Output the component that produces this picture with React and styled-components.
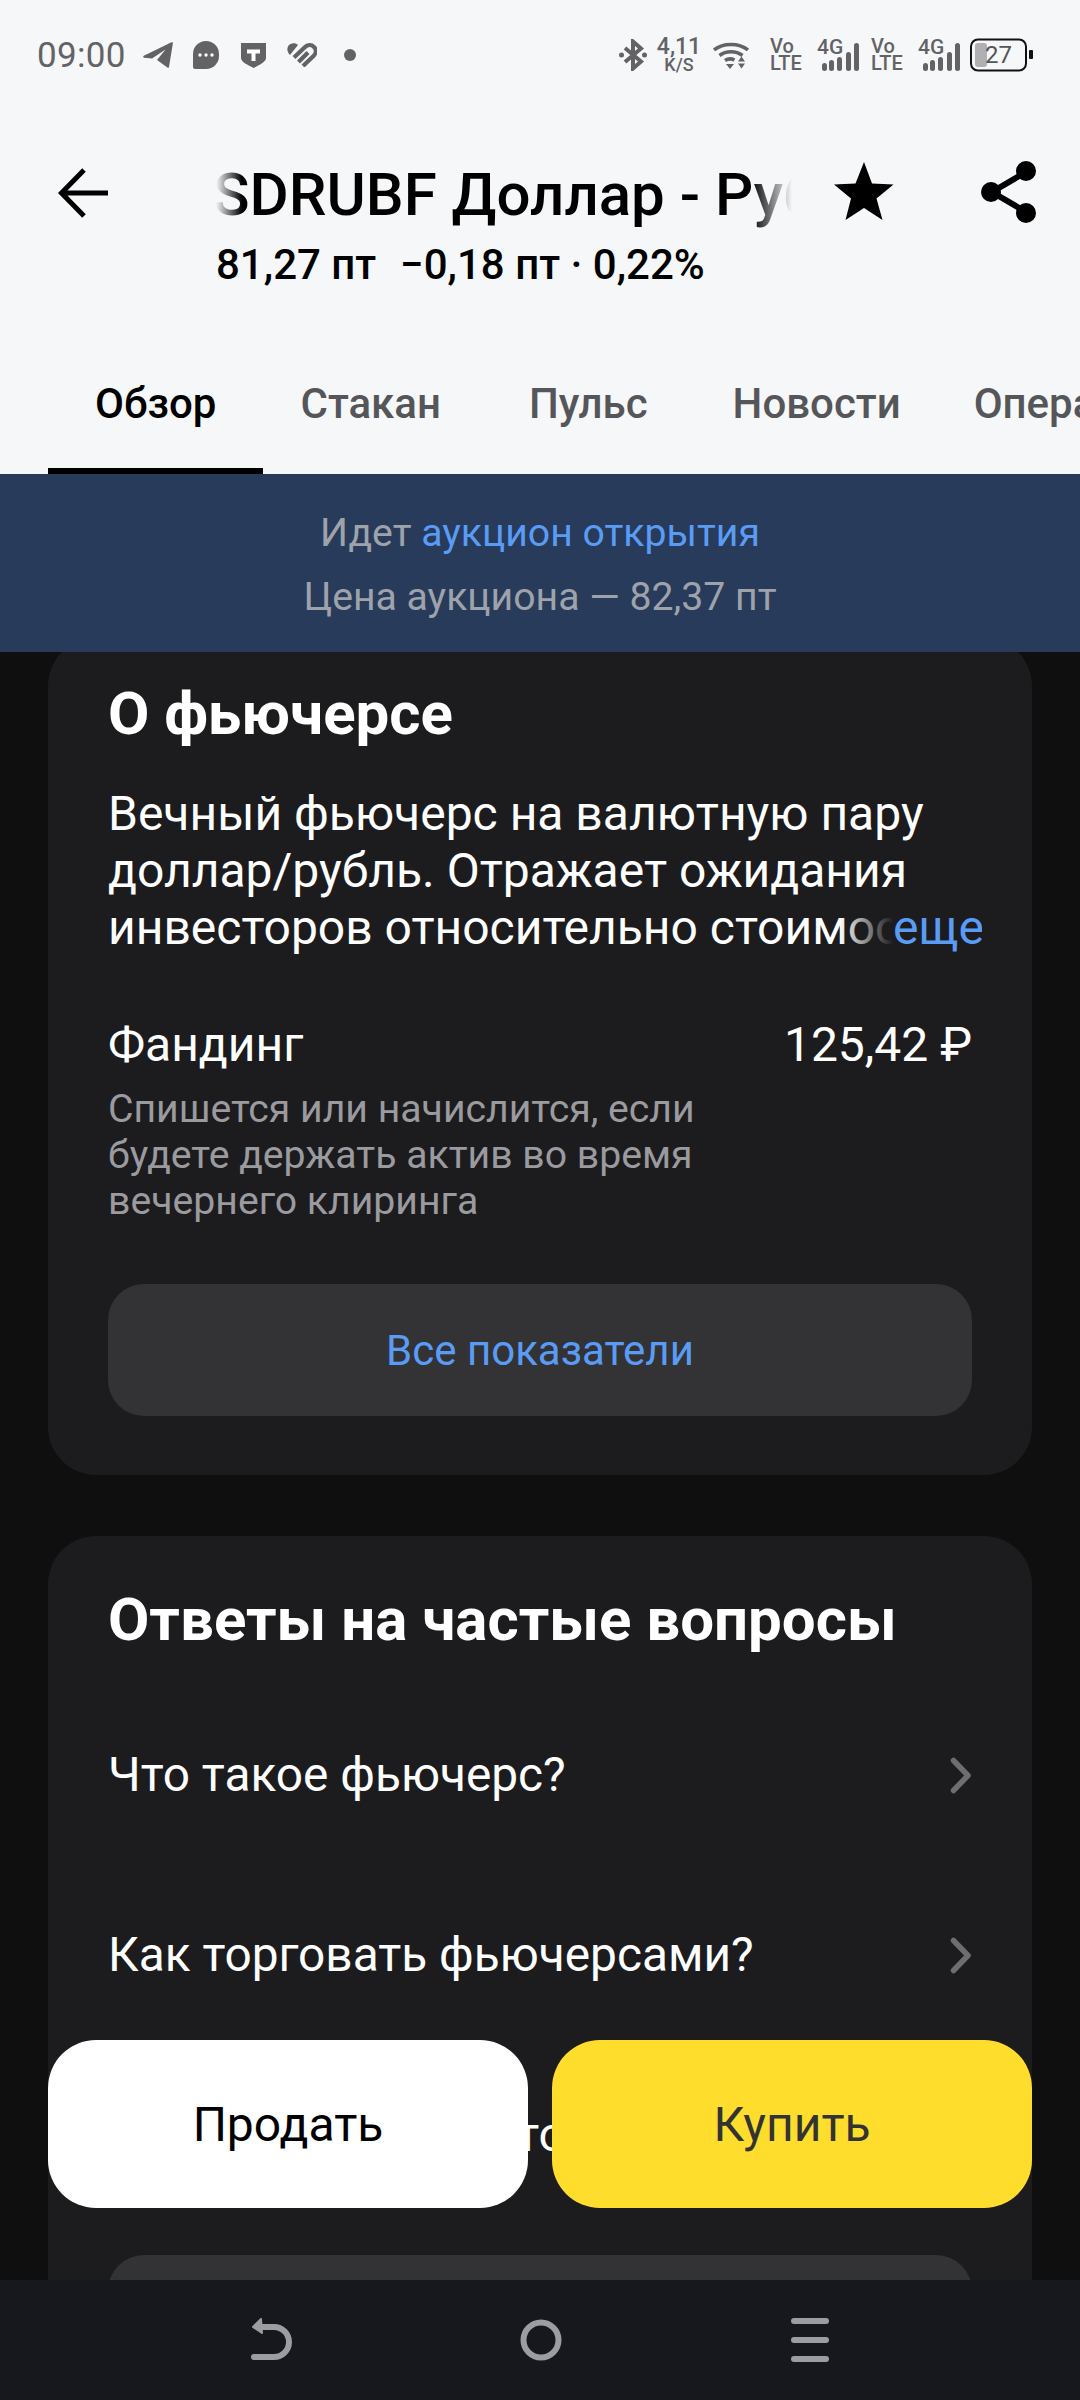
import React from "react";
import styled, { createGlobalStyle } from "styled-components";

const Global = createGlobalStyle`
  html, body { margin: 0; padding: 0; background: #0f0f10; }
  * { box-sizing: border-box; }
`;

const Screen = styled.div`
  position: relative;
  width: 1080px;
  height: 2400px;
  display: flex;
  flex-direction: column;
  overflow: hidden;
  font-family: Roboto, "Noto Sans", sans-serif;
  background: #0f0f10;
`;

const Top = styled.div`
  background: #f6f7f9;
  height: 474px;
  display: flex;
  flex-direction: column;
`;

const StatusBar = styled.div`
  height: 110px;
  padding: 0 47px 0 37px;
  display: flex;
  align-items: center;
  justify-content: space-between;
  color: #636366;
`;

const StatusGroup = styled.div`
  display: flex;
  align-items: center;
`;

const Slot = styled.div`
  margin-left: ${(p) => p.$left || 0}px;
  flex: none;
`;

const Time = styled.span`
  font-size: 35px;
  letter-spacing: 0.3px;
`;

const TwoLine = styled.div`
  width: ${(p) => p.$width}px;
  display: flex;
  flex-direction: column;
  align-items: ${(p) => p.$align || "center"};
  font-weight: 500;
  color: #636366;
`;

const Micro = styled.span`
  font-size: ${(p) => p.$size}px;
  line-height: ${(p) => p.$line}px;
`;

const Header = styled.div`
  height: 240px;
  display: flex;
  align-items: flex-start;
`;

const BackSlot = styled.div`
  width: 216px;
  padding: 58px 0 0 58px;
`;

const TitleBlock = styled.div`
  width: 584px;
  padding-top: 52px;
`;

const TitleClip = styled.div`
  overflow: hidden;
  white-space: nowrap;
  height: 70px;
  font-size: 60px;
  line-height: 66px;
  font-weight: 500;
  color: #000;
  mask-image: linear-gradient(90deg, transparent 0, #000 26px, #000 535px, transparent 576px);
`;

const TitleText = styled.span`
  display: inline-block;
  margin-left: -42px;
`;

const Quote = styled.div`
  margin-top: 10px;
  font-size: 42px;
  line-height: 46px;
  font-weight: 500;
  color: #000;
  white-space: pre;
`;

const QuoteDelta = styled.span`
  margin-left: 3px;
`;

const ActionIcon = styled.div`
  padding-top: ${(p) => p.$top}px;
  margin-left: ${(p) => p.$left}px;
`;

const Tabs = styled.div`
  margin-top: auto;
  height: 124px;
  padding-left: 95px;
  display: flex;
  white-space: nowrap;
  overflow: hidden;
`;

const Tab = styled.div`
  position: relative;
  height: 100%;
  margin-left: ${(p) => p.$left || 0}px;
  padding-top: 31px;
  font-size: 42px;
  line-height: 46px;
  font-weight: 500;
  color: ${(p) => (p.$active ? "#000" : "#55565a")};
  ${(p) =>
    p.$active &&
    `&::after {
      content: "";
      position: absolute;
      left: -47px;
      right: -47px;
      bottom: 0;
      height: 6px;
      background: #000;
    }`}
`;

const Banner = styled.div`
  height: 178px;
  flex: none;
  background: #283b5a;
  padding-top: 27px;
  text-align: center;
  font-size: 39.200px;
  line-height: 64px;
  color: #9ea3ab;
  position: relative;
  z-index: 1;
`;

const BannerLink = styled.span`
  color: #5a9cf5;
`;

const Scroll = styled.div`
  flex: 1;
  min-height: 0;
  overflow: hidden;
  padding: 0 48px;
`;

const Card = styled.section`
  background: #1c1c1e;
  border-radius: 48px;
  padding: 0 60px;
  margin-top: ${(p) => p.$top}px;
  height: ${(p) => p.$height}px;
  color: #fff;
`;

const CardTitle = styled.h2`
  margin: 0;
  padding-top: ${(p) => p.$top}px;
  font-size: 60px;
  line-height: 66px;
  font-weight: 700;
  color: #fff;
`;

const Body = styled.div`
  position: relative;
  margin-top: 38px;
  height: 171px;
  overflow: hidden;
  font-size: 48px;
  line-height: 57px;
  width: 874px;
`;

const More = styled.span`
  position: absolute;
  right: 0;
  bottom: 0;
  padding-left: 54px;
  color: #5a9cf5;
  background: linear-gradient(90deg, rgba(28, 28, 30, 0), #1c1c1e 54px);
  width: 143px;
`;

const FundingRow = styled.div`
  margin-top: 62px;
  display: flex;
  justify-content: space-between;
  align-items: flex-start;
  font-size: 48px;
  line-height: 54px;
`;

const Hint = styled.div`
  margin-top: 14px;
  font-size: 39.200px;
  line-height: 46px;
  color: #9a9a9f;
`;

const GhostButton = styled.div`
  margin-top: ${(p) => p.$top}px;
  height: 132px;
  background: #333335;
  border-radius: 36px;
  display: flex;
  align-items: center;
  justify-content: center;
  font-size: 42px;
  color: #5a9cf5;
`;

const FaqRow = styled.div`
  height: 180px;
  display: flex;
  align-items: center;
  justify-content: space-between;
  font-size: 47.800px;
  white-space: nowrap;
`;

const FaqList = styled.div`
  margin-top: 32px;
`;

const TradeBar = styled.div`
  position: absolute;
  left: 48px;
  right: 48px;
  top: 2040px;
  display: grid;
  grid-template-columns: 1fr 1fr;
  gap: 24px;
`;

const TradeButton = styled.div`
  height: 168px;
  border-radius: 48px;
  background: ${(p) => p.$bg};
  color: ${(p) => p.$color};
  display: flex;
  align-items: center;
  justify-content: center;
  font-size: 48px;
`;

const NavBar = styled.nav`
  height: 120px;
  flex: none;
  background: #16181d;
  display: flex;
  align-items: center;
  justify-content: center;
  gap: 228px;
`;

const Back = () => (
  <svg width="52" height="50" viewBox="0 0 52 50" fill="none" stroke="#000" strokeWidth="5" style={{ display: "block" }}>
    <path d="M50 25H4M26 2 3.500 25 26 48" />
  </svg>
);

const Star = () => (
  <svg width="60" height="60" viewBox="0 0 60 60" style={{ display: "block" }}>
    <path d="M30 1l8 21.500 21.500 1-17 14L48.500 59 30 47 11.500 59l5.500-21.500-17-14 21.500-1z" fill="#000" />
  </svg>
);

const Share = () => (
  <svg width="56" height="62" viewBox="0 0 56 62" style={{ display: "block" }}>
    <path d="M45 11 11 31l34 20" fill="none" stroke="#000" strokeWidth="6" />
    <circle cx="45" cy="10" r="10" />
    <circle cx="10" cy="31" r="10" />
    <circle cx="45" cy="52" r="10" />
  </svg>
);

const Chevron = () => (
  <svg width="22" height="37" viewBox="0 0 22 37" fill="none" stroke="#6e6e72" strokeWidth="5.500" strokeLinecap="round" strokeLinejoin="round">
    <path d="M3.500 3.500 18 18.500 3.500 33.500" />
  </svg>
);

const Plane = () => (
  <svg width="30" height="26" viewBox="0 0 30 26" fill="#636366" style={{ display: "block" }}>
    <path d="M.8 13.800 28.500.3c.8-.4 1.500.2 1.400 1L26 25c-.2.9-.9 1.100-1.600.6L14 18 22.500 7.500 9 16.500 1 15.800c-1-.2-1.100-1.500-.2-2z" />
  </svg>
);

const Bubble = () => (
  <svg width="26" height="28" viewBox="0 0 26 28" style={{ display: "block" }}>
    <path d="M13 0a13 13 0 0 1 13 13v2a13 13 0 0 1-13 13H2a2 2 0 0 1-2-2V13A13 13 0 0 1 13 0z" fill="#636366" />
    <circle cx="7" cy="14" r="1.700" fill="#fff" />
    <circle cx="13" cy="14" r="1.700" fill="#fff" />
    <circle cx="19" cy="14" r="1.700" fill="#fff" />
  </svg>
);

const Shield = () => (
  <svg width="25" height="25" viewBox="0 0 25 25" style={{ display: "block" }}>
    <path d="M0 0h25v15c0 4-7 7-12.500 10C7 22 0 19 0 15z" fill="#636366" />
    <path d="M6 6.500h13v4h-4.500V18h-4v-7.500H6z" fill="#fff" />
  </svg>
);

const Heart = () => (
  <svg width="30" height="24" viewBox="0 0 30 24" fill="none" style={{ display: "block" }}>
    <path d="M3 12C-.5 8.500-.5 3.500 3 1.300 6-.5 9 0 11 2z" fill="#636366" />
    <path d="M7 14.500 17.500 4.500c3-3 7-3 9.500-.5 2.500 2.500 2 6.500-.5 9L16 23" stroke="#636366" strokeWidth="4.200" />
    <path d="M11.500 19 21 9.500" stroke="#636366" strokeWidth="4.200" />
  </svg>
);

const Bluetooth = () => (
  <svg width="28" height="32" viewBox="0 0 28 32" fill="none" style={{ display: "block" }}>
    <path d="M6 9l16 13.500-8 7V2.500l8 7L6 23" stroke="#636366" strokeWidth="4" />
    <circle cx="2.500" cy="16" r="2.500" fill="#636366" />
    <circle cx="25.500" cy="16" r="2.500" fill="#636366" />
  </svg>
);

const Wifi = () => (
  <svg width="36" height="27" viewBox="0 0 36 27" fill="none" style={{ display: "block" }}>
    <path d="M1 8C10 .5 26 .5 35 8M6.500 13.500c6.500-5 16.500-5 23 0M12 18.500c3-2 6.500-2 9.500-.5" stroke="#636366" strokeWidth="3.500" />
    <path d="M13 22h8l-4 5zM25 19.500h7l-3.500-5zM25 21.500h7l-3.500 5z" fill="#636366" />
  </svg>
);

const Signal = () => (
  <svg width="42" height="34" viewBox="0 0 42 34" style={{ display: "block" }}>
    <text x="0" y="16" fontFamily="Roboto" fontWeight="500" fontSize="21" fill="#636366">4G</text>
    <rect x="5" y="25" width="5" height="8" rx="2.500" fill="#636366" />
    <rect x="12" y="22" width="5" height="11" rx="2.500" fill="#636366" />
    <rect x="20" y="19" width="5" height="14" rx="2.500" fill="#636366" />
    <rect x="29" y="14" width="5" height="19" rx="2.500" fill="#636366" />
    <rect x="37" y="5" width="5" height="28" rx="2.500" fill="#636366" />
  </svg>
);

const Battery = () => (
  <svg width="63" height="34" viewBox="0 0 63 34" style={{ display: "block" }}>
    <rect x="1" y="1.500" width="55" height="31" rx="7" fill="none" stroke="#111" strokeWidth="2" />
    <rect x="5" y="5" width="12" height="24" rx="3" fill="#b0b0b2" />
    <rect x="59" y="12" width="4" height="9" rx="1" fill="#111" />
    <text x="15" y="25" fontFamily="Roboto" fontSize="24" fill="#555">27</text>
  </svg>
);

const NavBack = () => (
  <svg width="42" height="46" viewBox="0 0 42 46" fill="none" stroke="#9c9da1" strokeWidth="6" strokeLinecap="round">
    <path d="M10 10h14a13.500 13.500 0 0 1 0 30H4" />
    <path d="M3 10 11 2l1 14z" fill="#9c9da1" strokeWidth="2" strokeLinejoin="round" />
  </svg>
);

const NavHome = () => (
  <svg width="42" height="44" viewBox="0 0 42 44" fill="none" stroke="#9c9da1" strokeWidth="6">
    <circle cx="21" cy="22" r="17.500" />
  </svg>
);

const NavMenu = () => (
  <svg width="40" height="44" viewBox="0 0 40 44" fill="#9c9da1">
    <rect x="1" y="0" width="38" height="6" rx="3" />
    <rect x="1" y="19" width="38" height="6" rx="3" />
    <rect x="1" y="38" width="38" height="6" rx="3" />
  </svg>
);

const VoLte = () => (
  <TwoLine $width={30} $align="flex-start">
    <Micro $size={20} $line={17}>Vo</Micro>
    <Micro $size={20} $line={17}>LTE</Micro>
  </TwoLine>
);

export default function App() {
  return (
    <Screen>
      <Global />
      <Top>
        <StatusBar>
          <StatusGroup>
            <Time>09:00</Time>
            <Slot $left={17}><Plane /></Slot>
            <Slot $left={20}><Bubble /></Slot>
            <Slot $left={22}><Shield /></Slot>
            <Slot $left={21}><Heart /></Slot>
            <Slot $left={27}>
              <svg width="12" height="12" viewBox="0 0 12 12" style={{ display: "block" }}>
                <circle cx="6" cy="6" r="6" fill="#636366" />
              </svg>
            </Slot>
          </StatusGroup>
          <StatusGroup>
            <Bluetooth />
            <Slot $left={14}>
              <TwoLine $width={36}>
                <Micro $size={23} $line={19}>4,11</Micro>
                <Micro $size={18} $line={17}>K/S</Micro>
              </TwoLine>
            </Slot>
            <Slot $left={16}><Wifi /></Slot>
            <Slot $left={21}><VoLte /></Slot>
            <Slot $left={17}><Signal /></Slot>
            <Slot $left={12}><VoLte /></Slot>
            <Slot $left={17}><Signal /></Slot>
            <Slot $left={10}><Battery /></Slot>
          </StatusGroup>
        </StatusBar>
        <Header>
          <BackSlot>
            <Back />
          </BackSlot>
          <TitleBlock>
            <TitleClip>
              <TitleText>USDRUBF Доллар - Рубль</TitleText>
            </TitleClip>
            <Quote>81,27 пт  <QuoteDelta>−0,18 пт · 0,22%</QuoteDelta></Quote>
          </TitleBlock>
          <ActionIcon $top={51} $left={34}>
            <Star />
          </ActionIcon>
          <ActionIcon $top={51} $left={87}>
            <Share />
          </ActionIcon>
        </Header>
        <Tabs>
          <Tab $active>Обзор</Tab>
          <Tab $left={84}>Стакан</Tab>
          <Tab $left={88}>Пульс</Tab>
          <Tab $left={85}>Новости</Tab>
          <Tab $left={73}>Операции</Tab>
        </Tabs>
      </Top>
      <Banner>
        <div>
          Идет <BannerLink>аукцион открытия</BannerLink>
        </div>
        <div>Цена аукциона — 82,37 пт</div>
      </Banner>
      <Scroll>
        <Card $top={-14} $height={837}>
          <CardTitle $top={43}>О фьючерсе</CardTitle>
          <Body>
            Вечный фьючерс на валютную пару доллар/рубль. Отражает ожидания инвесторов относительно стоимости доллара к рублю.
            <More>еще</More>
          </Body>
          <FundingRow>
            <span>Фандинг</span>
            <span>125,42 ₽</span>
          </FundingRow>
          <Hint>
            Спишется или начислится, если
            <br />
            будете держать актив во время
            <br />
            вечернего клиринга
          </Hint>
          <GhostButton $top={60}>Все показатели</GhostButton>
        </Card>
        <Card $top={61} $height={1000}>
          <CardTitle $top={51}>Ответы на частые вопросы</CardTitle>
          <FaqList>
            <FaqRow>
              <span>Что такое фьючерс?</span>
              <Chevron />
            </FaqRow>
            <FaqRow>
              <span>Как торговать фьючерсами?</span>
              <Chevron />
            </FaqRow>
            <FaqRow>
              <span>Как определяют стоимость?</span>
              <Chevron />
            </FaqRow>
          </FaqList>
          <GhostButton $top={30}>Все вопросы</GhostButton>
        </Card>
      </Scroll>
      <TradeBar>
        <TradeButton $bg="#fff" $color="#000">Продать</TradeButton>
        <TradeButton $bg="#ffdd2d" $color="#333">Купить</TradeButton>
      </TradeBar>
      <NavBar>
        <NavBack />
        <NavHome />
        <NavMenu />
      </NavBar>
    </Screen>
  );
}
